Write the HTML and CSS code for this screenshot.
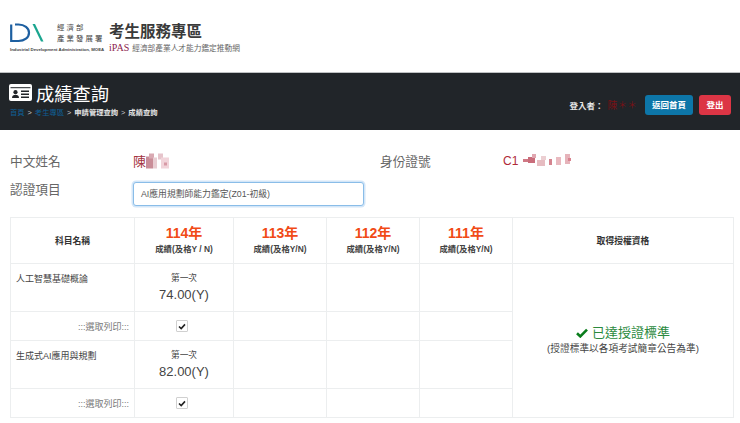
FILE: index.html
```html
<!DOCTYPE html>
<html lang="zh-Hant">
<head>
<meta charset="utf-8">
<title>成績查詢</title>
<link rel="stylesheet" href="styles.css">
</head>
<body>
<header class="brand">
  <div class="moea">
    <div class="moea-top">
      <svg class="moea-logo" width="34" height="20" viewBox="0 0 34 20">
        <path d="M1.2 1.5V18H8.5C14.5 18 19 14.5 19 9.7C19 5 14.5 1.5 8.5 1.5H5" fill="none" stroke="#1d5fa0" stroke-width="2.2"/>
        <path d="M25 1L33.5 18.5H31L22.5 1Z" fill="#1aa58f"/>
      </svg>
      <div class="moea-name"><span>經濟部</span><span>產業發展署</span></div>
    </div>
    <div class="moea-en">Industrial Development Administration, MOEA</div>
  </div>
  <div class="site">
    <div class="site-title">考生服務專區</div>
    <div class="site-sub"><span class="ipas">iPAS</span><span>經濟部產業人才能力鑑定推動網</span></div>
  </div>
</header>

<section class="band">
  <div class="band-left">
    <h1 class="page-title">
      <svg class="id-icon" width="23" height="17" viewBox="0 0 23 17">
        <rect width="23" height="17" rx="2" fill="#fff"/>
        <rect x="1.5" y="3.2" width="20" height="1" fill="#212529"/>
        <circle cx="6.5" cy="8.2" r="2.1" fill="#212529"/>
        <path d="M3 14C3 11.5 4.5 10.8 6.5 10.8C8.5 10.8 10 11.5 10 14Z" fill="#212529"/>
        <rect x="12" y="6.5" width="8" height="1.5" fill="#212529"/>
        <rect x="12" y="9.5" width="8" height="1.5" fill="#212529"/>
        <rect x="12" y="12.5" width="8" height="1.5" fill="#212529"/>
      </svg>
      <span>成績查詢</span>
    </h1>
    <nav class="crumbs">
      <a>首頁</a><i>&gt;</i><a>考生專區</a><i>&gt;</i><b>申請管理查詢</b><i>&gt;</i><b>成績查詢</b>
    </nav>
  </div>
  <div class="band-right">
    <span class="login-label">登入者：</span>
    <span class="login-name">陳＊＊</span>
    <a class="btn btn-blue">返回首頁</a>
    <a class="btn btn-red">登出</a>
  </div>
</section>

<main class="content">
  <div class="info-row">
    <label class="info-label">中文姓名</label>
    <div class="info-value name-value">陳<svg class="mosaic" width="26" height="16" viewBox="0 0 26 15">
      <rect x="0" y="3" width="7" height="12" fill="#c98d98"/>
      <rect x="3" y="0" width="5" height="5" fill="#d9a9b2"/>
      <rect x="7" y="4" width="4" height="11" fill="#e8cdd2"/>
      <rect x="12" y="0" width="5" height="6" fill="#e6c4cb"/>
      <rect x="15" y="4" width="8" height="11" fill="#f1d4da"/>
      <rect x="18" y="9" width="3" height="3" fill="#d79aa6"/>
    </svg></div>
    <label class="info-label id-label">身份證號</label>
    <div class="info-value id-value">C1<svg class="mosaic" width="60" height="14" viewBox="0 0 50 14">
      <rect x="0" y="5" width="5" height="3" fill="#d07884"/>
      <rect x="5" y="3" width="7" height="6" fill="#c96d7b"/>
      <rect x="9" y="0" width="4" height="4" fill="#e0a6b0"/>
      <rect x="14" y="6" width="8" height="6" fill="#e6bcc1"/>
      <rect x="18" y="2" width="5" height="4" fill="#eccfd2"/>
      <rect x="26" y="5" width="3" height="6" fill="#d4848f"/>
      <rect x="33" y="3" width="5" height="8" fill="#e9bac0"/>
      <rect x="42" y="0" width="5" height="10" fill="#e6b3ba"/>
      <rect x="45" y="4" width="3" height="3" fill="#d8838f"/>
    </svg></div>
  </div>
  <div class="info-row cert-row">
    <label class="info-label">認證項目</label>
    <div class="select-box">AI應用規劃師能力鑑定(Z01-初級)</div>
  </div>

  <table class="scores">
    <colgroup>
      <col class="c-name"><col class="c-114"><col class="c-y"><col class="c-y"><col class="c-y"><col class="c-qual">
    </colgroup>
    <thead>
      <tr>
        <th>科目名稱</th>
        <th><span class="year">114年</span><span class="yn">成績(及格Y / N)</span></th>
        <th><span class="year">113年</span><span class="yn">成績(及格Y/N)</span></th>
        <th><span class="year">112年</span><span class="yn">成績(及格Y/N)</span></th>
        <th><span class="year">111年</span><span class="yn">成績(及格Y/N)</span></th>
        <th>取得授權資格</th>
      </tr>
    </thead>
    <tbody>
      <tr class="score-row">
        <td class="subject">人工智慧基礎概論</td>
        <td class="score"><span class="attempt">第一次</span><span class="points">74.00(Y)</span></td>
        <td></td><td></td><td></td>
        <td class="qual" rowspan="4">
          <div class="qual-main">
            <svg class="check" width="12" height="10" viewBox="0 0 12 10"><path d="M1 5.2L4.3 8.4L11 1.6" fill="none" stroke="#0a7d1c" stroke-width="2.6"/></svg>
            <span>已達授證標準</span>
          </div>
          <div class="qual-note">(授證標準以各項考試簡章公告為準)</div>
        </td>
      </tr>
      <tr class="print-row">
        <td class="print-label">:::選取列印:::</td>
        <td class="print-cell"><span class="checkbox"><svg width="8" height="7" viewBox="0 0 8 7"><path d="M1 3.5L3.2 5.6L7 1.4" fill="none" stroke="#222" stroke-width="1.6"/></svg></span></td>
        <td></td><td></td><td></td>
      </tr>
      <tr class="score-row">
        <td class="subject">生成式AI應用與規劃</td>
        <td class="score"><span class="attempt">第一次</span><span class="points">82.00(Y)</span></td>
        <td></td><td></td><td></td>
      </tr>
      <tr class="print-row">
        <td class="print-label">:::選取列印:::</td>
        <td class="print-cell"><span class="checkbox"><svg width="8" height="7" viewBox="0 0 8 7"><path d="M1 3.5L3.2 5.6L7 1.4" fill="none" stroke="#222" stroke-width="1.6"/></svg></span></td>
        <td></td><td></td><td></td>
      </tr>
    </tbody>
  </table>
</main>
</body>
</html>
```

FILE: styles.css
```css
* { box-sizing: border-box; }
html, body { margin: 0; padding: 0; }
body {
  width: 740px;
  height: 423px;
  overflow: hidden;
  background: #fff;
  color: #444;
  font-family: "Liberation Sans", "Noto Sans CJK TC", sans-serif;
}

.brand {
  height: 73px;
  padding: 23px 0 0 10px;
  display: flex;
  align-items: flex-start;
  gap: 5px;
  border-bottom: 1px solid #bfc1c3;
}
.moea { width: 94px; }
.moea-top { display: flex; height: 22px; gap: 13px; }
.moea-logo { flex: none; }
.moea-name {
  display: flex;
  flex-direction: column;
  gap: 2px;
  font-size: 7.4px;
  line-height: 9px;
  letter-spacing: 2.1px;
  color: #444;
  white-space: nowrap;
}
.moea-en {
  margin-top: 2px;
  font-size: 4.3px;
  line-height: 6px;
  font-weight: bold;
  color: #444;
  white-space: nowrap;
}
.site-title {
  font-size: 15.5px;
  line-height: 17px;
  font-weight: bold;
  color: #3a3a3a;
}
.site-sub {
  display: flex;
  align-items: center;
  gap: 3px;
  margin-top: 2px;
  height: 11px;
  font-size: 7.7px;
  color: #666;
  white-space: nowrap;
}
.ipas {
  font-family: "Liberation Serif", serif;
  font-size: 10px;
  color: #8c1c4d;
}

.band {
  height: 57px;
  background: #212529;
  display: flex;
  justify-content: space-between;
  padding: 7px 9px 0 9px;
}
.page-title {
  margin: 0;
  display: flex;
  align-items: center;
  gap: 4px;
  height: 25px;
  font-size: 18.3px;
  font-weight: normal;
  color: #fff;
}
.id-icon { flex: none; }
.crumbs {
  margin: 2px 0 0 1px;
  font-size: 7.3px;
  line-height: 11px;
  color: #ddd;
  white-space: nowrap;
}
.crumbs a { color: #0f5f95; }
.crumbs i { font-style: normal; margin: 0 3px; color: #ccc; }
.crumbs b { color: #e4e4e4; }
.band-right {
  display: flex;
  align-items: center;
  height: 20px;
  margin-top: 15px;
  font-size: 8.5px;
}
.login-label { color: #e6e6e6; font-weight: bold; margin-right: 4px; }
.login-name { color: #7a1015; margin-right: 8px; font-size: 9.8px; }
.btn {
  height: 20px;
  line-height: 20px;
  border-radius: 3px;
  color: #fff;
  text-align: center;
  font-weight: bold;
  font-size: 8.5px;
}
.btn-blue { width: 48px; background: #0d76a8; margin-right: 6px; }
.btn-red { width: 32px; background: #dc3545; }

.content { padding: 0 7px 0 10px; }
.info-row { display: flex; align-items: center; height: 31px; margin-top: 15px; }
.cert-row { height: 25px; margin-top: 5px; }
.info-label {
  width: 123px;
  font-size: 12.7px;
  color: #666;
  flex: none;
}
.cert-row .info-label { margin-bottom: 10px; }
.info-value { display: flex; align-items: center; font-size: 13px; }
.name-value { width: 124px; color: #a3333f; }
.info-row .id-label { width: 123px; margin-left: 123px; }
.id-value { color: #b02a37; font-size: 12px; }
.mosaic { flex: none; filter: blur(0.4px); }
.select-box {
  width: 231px;
  height: 24px;
  line-height: 22px;
  padding-left: 7px;
  border: 1px solid #8abde8;
  border-radius: 3px;
  box-shadow: 0 0 0 1.5px #d3e6f8;
  font-size: 8.8px;
  color: #555;
  background: #fff;
}

.scores {
  width: 723px;
  margin-top: 11px;
  border-collapse: collapse;
  table-layout: fixed;
  border: 1px solid #eceeef;
  font-size: 9px;
}
.c-name { width: 124px; }
.c-114 { width: 99px; }
.c-y { width: 93px; }
.c-qual { width: 221px; }
.scores th, .scores td {
  border: 1px solid #eceeef;
  padding: 0;
  text-align: center;
  vertical-align: middle;
}
.scores thead tr { height: 46px; }
.scores th { font-size: 8.8px; color: #333; font-weight: bold; }
.year {
  display: block;
  font-size: 14px;
  line-height: 15px;
  font-weight: bold;
  color: #f14a16;
}
.yn {
  display: block;
  margin-top: 3px;
  line-height: 11px;
  font-size: 8.4px;
  color: #444;
  white-space: nowrap;
}
.score-row { height: 48px; }
.print-row { height: 29px; }
.scores td.subject {
  text-align: left;
  vertical-align: top;
  padding: 9px 0 0 5px;
  font-size: 9px;
  line-height: 12px;
  color: #444;
}
.attempt { display: block; font-size: 8.7px; line-height: 12px; }
.points { display: block; font-size: 13px; line-height: 18px; margin-top: 2px; }
.scores td.print-label {
  text-align: right;
  padding-right: 5px;
  font-size: 9px;
  color: #777;
}
.checkbox {
  display: inline-flex;
  width: 12px;
  height: 12px;
  margin-right: 4px;
  align-items: center;
  justify-content: center;
  border: 1px solid #d0d0d0;
  border-radius: 1px;
  background: #fff;
  vertical-align: middle;
}
.qual-main {
  display: flex;
  align-items: center;
  justify-content: center;
  gap: 4px;
  margin-top: -2px;
  font-size: 13px;
  line-height: 18px;
  color: #2b8a3e;
}
.qual-note {
  margin-top: 1px;
  font-size: 9.7px;
  line-height: 12px;
  color: #444;
}
```
